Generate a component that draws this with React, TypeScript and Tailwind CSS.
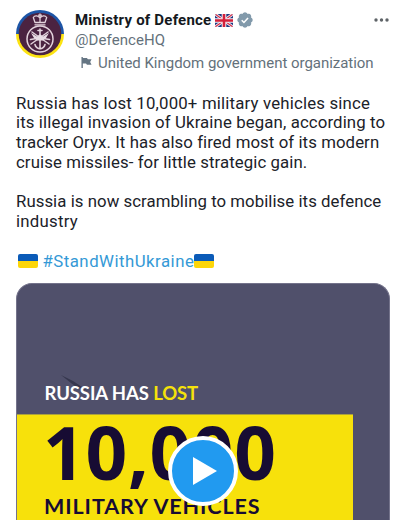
import React from "react";

function Avatar() {
  return (
    <svg viewBox="0 0 48 48" className="h-12 w-12 shrink-0" aria-hidden="true">
      <path d="M0 24a24 24 0 0 1 48 0z" fill="#1d55a6" />
      <path d="M0 24a24 24 0 0 0 48 0z" fill="#fce312" />
      <circle cx="24" cy="24" r="21.3" fill="#4b2341" />
      <g fill="none" stroke="#e3d3dc" strokeLinecap="round" strokeLinejoin="round">
        <circle cx="24" cy="29" r="13" strokeWidth="1.500" />
        <path d="M19 12.500 17.300 7.500c1.700-2.600 4.700-1.700 6.700.5 2-2.200 5-3.100 6.700-.5L29 12.500zM24 4v8M22.500 5.200h3" strokeWidth="1.300" />
        <path d="M19 14.800h10" strokeWidth="1.300" />
        <path d="M24 25v14M19 34.500c.5 2.500 3 4.300 5 4.300s4.500-1.800 5-4.300" strokeWidth="1.600" />
        <path d="M16 22l17 12M32 22L15 34" strokeWidth="1.500" />
        <path d="M14.500 29.500l6-1M33.500 29.500l-6-1M22 20.500h4M24 19v5" strokeWidth="1.600" />
      </g>
      <path d="M24 24l3 2.500 6-3.500-3 5-3 2.500h-6L18 28l-3-5 6 3.500z" fill="#e9dde4" />
    </svg>
  );
}

function UnionJack() {
  return (
    <svg viewBox="0 0 18 13" className="ml-[4px] h-[13px] w-[18px]" aria-hidden="true">
      <defs>
        <clipPath id="uk"><rect width="18" height="13" rx="1.500" /></clipPath>
      </defs>
      <g clipPath="url(#uk)">
        <rect width="18" height="13" fill="#203a82" />
        <path d="M0 0l18 13M18 0L0 13" stroke="#f3eef3" strokeWidth="3" />
        <path d="M0 0l18 13M18 0L0 13" stroke="#d32f4a" strokeWidth="1.200" />
        <path d="M9 0v13M0 6.500h18" stroke="#f3eef3" strokeWidth="4.600" />
        <path d="M9 0v13M0 6.500h18" stroke="#d41f3a" strokeWidth="2.600" />
      </g>
    </svg>
  );
}

function Verified() {
  return (
    <svg viewBox="0 0 22 22" className="ml-[3px] h-[18px] w-[18px]" aria-hidden="true">
      <path fill="#829aab" d="M20.396 11c-.018-.646-.215-1.275-.57-1.816-.354-.54-.852-.972-1.438-1.246.223-.607.27-1.264.14-1.897-.131-.634-.437-1.218-.882-1.687-.47-.445-1.053-.75-1.687-.882-.633-.13-1.290-.083-1.897.140-.273-.587-.704-1.086-1.245-1.440S11.647 1.620 11 1.604c-.646.017-1.273.213-1.813.568s-.969.854-1.240 1.440c-.608-.223-1.267-.272-1.902-.140-.635.130-1.220.436-1.690.882-.445.470-.749 1.055-.878 1.688-.130.633-.080 1.290.144 1.896-.587.274-1.087.705-1.443 1.245-.356.540-.555 1.170-.574 1.817.020.647.218 1.276.574 1.817.356.540.856.972 1.443 1.245-.224.606-.274 1.263-.144 1.896.130.634.433 1.218.877 1.688.470.443 1.054.747 1.687.878.633.132 1.290.084 1.897-.136.274.586.705 1.084 1.246 1.439.540.354 1.170.551 1.816.569.647-.016 1.276-.213 1.817-.567s.972-.854 1.245-1.440c.604.239 1.266.296 1.903.164.636-.132 1.220-.447 1.680-.907.460-.460.776-1.044.908-1.681s.075-1.299-.165-1.903c.586-.274 1.084-.705 1.439-1.246.354-.540.551-1.170.569-1.816z" />
      <path d="M7 11.300l2.700 2.700 5-5.500" fill="none" stroke="#fff" strokeWidth="1.900" />
    </svg>
  );
}

function UkraineFlag() {
  return (
    <span className="flex h-[14px] w-5 flex-col overflow-hidden rounded-[2px]">
      <span className="h-[7px] bg-[#0b5bb8]" />
      <span className="h-[7px] bg-[#fdd60a]" />
    </span>
  );
}

export default function App() {
  return (
    <main className="flex h-[520px] w-[406px] flex-col overflow-hidden bg-white font-['Roboto',sans-serif] text-[#1b2229]">
      <header className="flex h-[84px] shrink-0 pl-4 pr-[17px] pt-[10px]">
        <Avatar />
        <div className="flex grow flex-col whitespace-nowrap pl-[11px] text-[#64717b]">
          <div className="flex h-5 items-center">
            <span className="text-[15px] font-bold tracking-[0.220px] text-[#14191e]">Ministry of Defence</span>
            <UnionJack />
            <Verified />
            <svg viewBox="0 0 15 4" className="ml-auto h-1 w-[15px]" fill="#5f6468" aria-hidden="true">
              <circle cx="2" cy="2" r="1.700" /><circle cx="7.500" cy="2" r="1.700" /><circle cx="13" cy="2" r="1.700" />
            </svg>
          </div>
          <div className="flex h-5 items-center text-[15px] tracking-[0.080px]">@DefenceHQ</div>
          <div className="flex h-[27px] items-center pl-1.5 text-[15px] tracking-[-0.030px]">
            <svg viewBox="0 0 11 12" className="mr-[6px] h-[11px] w-[11px] -translate-y-px" fill="#657583" aria-hidden="true">
              <path d="M0 0h1.500v12H0zM1.500 1h4.500l1 1.500h4L9.500 5.500 11 8.500H6L5 7H1.500z" />
            </svg>
            <span>United Kingdom government organization</span>
          </div>
        </div>
      </header>

      <section className="h-[199px] shrink-0 whitespace-nowrap pl-4 pt-[9.500px] text-[16.800px] leading-[19.750px]">
        <p><span className="tracking-[0.180px]">Russia has lost 10,000+ military vehicles since</span><br />
          <span className="tracking-[0.120px]">its illegal invasion of Ukraine began, according to</span><br />
          <span className="tracking-[0.080px]">tracker Oryx. It has also fired most of its modern</span><br />
          <span className="tracking-[0.090px]">cruise missiles- for little strategic gain.</span></p>
        <p className="mt-[19.750px]"><span className="tracking-[0.050px]">Russia is now scrambling to mobilise its defence</span><br />
          <span className="tracking-[0.250px]">industry</span></p>
        <p className="mt-[19.750px] flex items-center pl-[1.500px] text-[#3499d6]">
          <UkraineFlag /><span className="ml-[5px] tracking-[0.490px]">#StandWithUkraine</span><UkraineFlag />
        </p>
      </section>

      <section className="relative ml-4 h-[237px] w-[374px] shrink-0 overflow-hidden rounded-t-[16px] border-x border-t border-[#74738b] bg-[#50506b] font-['Lato',sans-serif] font-bold">
        <svg viewBox="0 0 30 18" className="absolute left-[43px] top-[91px] h-[18px] w-[30px]" aria-hidden="true">
          <path d="M1 0l12 6 15 10-13-5-4-3z" fill="#303149" opacity=".85" />
        </svg>
        <div className="relative flex h-[130px] items-end whitespace-nowrap pb-[9px] pl-[27.500px] text-[18.500px] leading-[24px] tracking-[-0.100px] text-white">
          <span>RUSSIA HAS <span className="text-[#f5e20a]">LOST</span></span>
        </div>
        <div className="flex h-[110px] w-[336px] shrink-0 flex-col whitespace-nowrap border-t border-[#aaa13d] bg-[#f7e10b] pl-[27px] text-[#170c33]">
          <span className="-ml-px h-[76px] font-['Open_Sans',sans-serif] text-[73px] font-bold leading-[74px] tracking-[0.700px]">10,000</span>
          <span className="text-[21.500px] leading-[30px] tracking-[0.920px]">MILITARY VEHICLES</span>
        </div>
        <div className="absolute left-[151px] top-[152px] flex h-[70px] w-[70px] items-center justify-center rounded-full border-4 border-white bg-[#219af0]">
          <svg viewBox="0 0 24 28" className="ml-[3px] h-7 w-6" aria-hidden="true"><path d="M0 0l24 14L0 28z" fill="#fff" /></svg>
        </div>
      </section>
    </main>
  );
}
